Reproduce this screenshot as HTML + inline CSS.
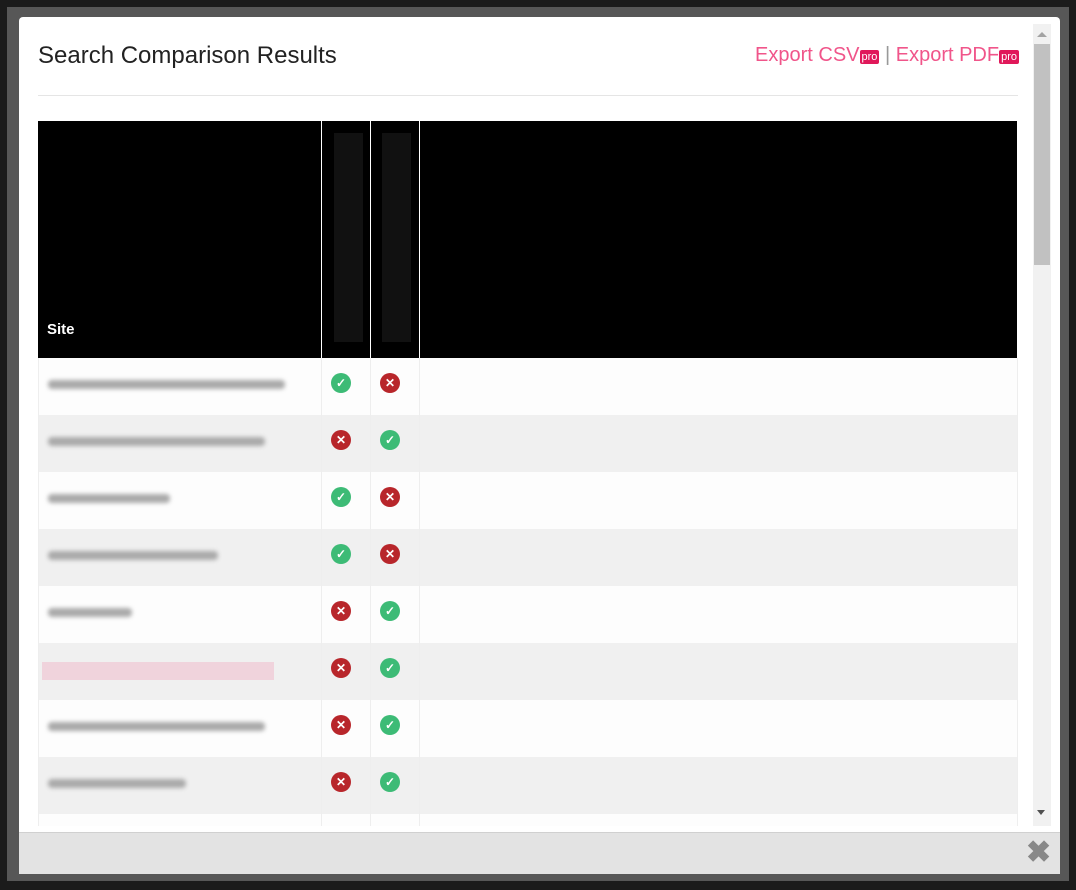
<!DOCTYPE html>
<html><head><style>
body{margin:0;width:1076px;height:890px;background:#1b1b1b;position:relative;overflow:hidden;font-family:"Liberation Sans",sans-serif}
.frame{position:absolute;left:7px;top:7px;width:1062px;height:874px;background:#575757}
.modal{position:absolute;left:19px;top:17px;width:1041px;height:815px;background:#fff;border-radius:4px 4px 0 0}
.footer{position:absolute;left:19px;top:832px;width:1041px;height:41px;background:#e3e3e3;border-top:1px solid #d0d0d0}
.sb{position:absolute;left:1033px;top:24px;width:18px;height:802px;background:#f1f1f1}
.thumb{position:absolute;left:1034px;top:44px;width:16px;height:221px;background:#c1c1c1}
h1{position:absolute;left:38px;top:42px;margin:0;font-weight:normal;font-size:24px;color:#222}
.exp{position:absolute;right:57px;top:44px;font-size:20px;color:#f0558a}
.pro{display:inline-block;background:#e0185a;color:#fff;font-size:11px;padding:0 2px;border-radius:2px;line-height:14px;vertical-align:1px}
.hr{position:absolute;left:38px;top:95px;width:980px;height:1px;background:#e5e5e5}
.th{position:absolute;top:121px;height:237px;background:#000}
.bar{position:absolute;top:133px;width:29px;height:209px;background:#111}
.row{position:absolute;left:38px;width:979px;height:57px}
.vl{position:absolute;width:1px;background:#eee;top:358px;height:468px}
.blur{position:absolute;left:10px;top:22px;height:9px;background:#aaa;filter:blur(2px);border-radius:4px}
.ic{position:absolute;top:15px;width:20px;height:20px;border-radius:50%;color:#fff;font-size:12px;font-weight:bold;text-align:center;line-height:20px}
.ok{background:#3dbb76}.no{background:#b8262b}
</style></head><body>
<div class="frame"></div>
<div class="modal"></div>
<div class="footer"></div>
<div style="position:absolute;left:1026px;top:838px;font-size:30px;font-weight:bold;color:#888;line-height:30px">✖</div>
<div class="sb"></div><div class="thumb"></div>
<div style="position:absolute;left:1037px;top:32px;border:5px solid transparent;border-bottom:5px solid #a3a3a3;border-top:0"></div>
<div style="position:absolute;left:1037px;top:810px;border:4px solid transparent;border-top:5px solid #505050;border-bottom:0"></div>
<h1>Search Comparison Results</h1>
<div class="exp">Export CSV<span class="pro">pro</span> <span style="color:#999">|</span> Export PDF<span class="pro">pro</span></div>
<div class="hr"></div>
<div class="th" style="left:38px;width:283px"><span style="position:absolute;left:9px;bottom:20px;color:#fff;font-weight:bold;font-size:15px">Site</span></div>
<div class="th" style="left:322px;width:48px"></div>
<div class="th" style="left:371px;width:48px"></div>
<div class="th" style="left:420px;width:597px"></div>
<div class="bar" style="left:334px"></div><div class="bar" style="left:382px"></div>

<div class="row" style="top:358px;background:#fdfdfd"><div class="blur" style="width:237px"></div><div class="ic ok" style="left:293px">✓</div><div class="ic no" style="left:342px">✕</div></div>
<div class="row" style="top:415px;background:#f0f0f0"><div class="blur" style="width:217px"></div><div class="ic no" style="left:293px">✕</div><div class="ic ok" style="left:342px">✓</div></div>
<div class="row" style="top:472px;background:#fdfdfd"><div class="blur" style="width:122px"></div><div class="ic ok" style="left:293px">✓</div><div class="ic no" style="left:342px">✕</div></div>
<div class="row" style="top:529px;background:#f0f0f0"><div class="blur" style="width:170px"></div><div class="ic ok" style="left:293px">✓</div><div class="ic no" style="left:342px">✕</div></div>
<div class="row" style="top:586px;background:#fdfdfd"><div class="blur" style="width:84px"></div><div class="ic no" style="left:293px">✕</div><div class="ic ok" style="left:342px">✓</div></div>
<div class="row" style="top:643px;background:#f0f0f0"><div style="position:absolute;left:4px;top:19px;width:232px;height:18px;background:#f0d3dc"></div><div class="ic no" style="left:293px">✕</div><div class="ic ok" style="left:342px">✓</div></div>
<div class="row" style="top:700px;background:#fdfdfd"><div class="blur" style="width:217px"></div><div class="ic no" style="left:293px">✕</div><div class="ic ok" style="left:342px">✓</div></div>
<div class="row" style="top:757px;background:#f0f0f0"><div class="blur" style="width:138px"></div><div class="ic no" style="left:293px">✕</div><div class="ic ok" style="left:342px">✓</div></div>
<div class="row" style="top:814px;height:12px;background:#fdfdfd"></div>
<div class="vl" style="left:38px"></div><div class="vl" style="left:321px"></div><div class="vl" style="left:370px"></div><div class="vl" style="left:419px"></div><div class="vl" style="left:1017px"></div>
</body></html>
